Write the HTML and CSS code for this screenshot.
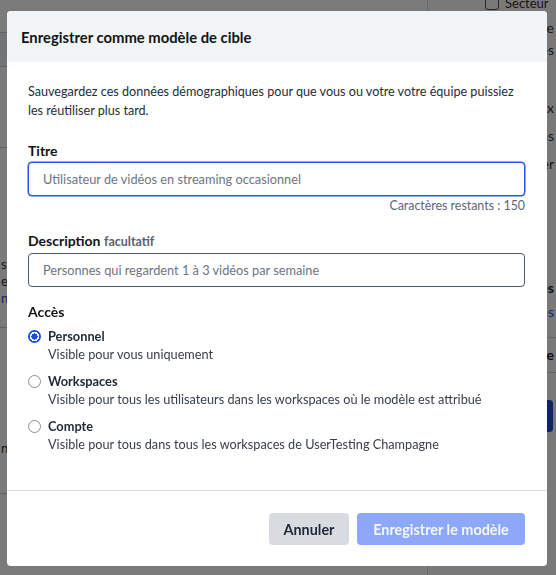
FILE: index.html
```html
<!DOCTYPE html>
<html lang="fr">
<head>
<meta charset="utf-8">
<title>Enregistrer comme modèle de cible</title>
<link rel="stylesheet" href="styles.css">
</head>
<body>
<div class="page">
  <div class="main">
    <div class="main-band"></div>
    <div class="main-rule r3"></div>
    <div class="main-block">
      <p class="main-line">s</p>
      <p class="main-line">e:</p>
      <p class="main-link">n</p>
    </div>
    <div class="main-rule r4"></div>
    <p class="main-line">n</p>
    <div class="main-rule r5"></div>
  </div>
  <aside class="side">
    <div class="side-check"><span class="box"></span><span>Secteur</span></div>
    <p class="side-line l1">Contexte</p>
    <p class="side-line l2">Dépenses</p>
    <p class="side-line l3">Réseaux</p>
    <p class="side-line">Médias</p>
    <p class="side-line">Streamer</p>
    <p class="side-bold">Exigences</p>
    <p class="side-link">Sélections</p>
    <div class="side-rule first"></div>
    <p class="side-bold2">Pratique</p>
    <div class="side-rule"></div>
    <div class="side-btn">Valider</div>
  </aside>
</div>

<div class="overlay">
  <div class="modal" role="dialog" aria-labelledby="modal-title">
    <header class="modal-header">
      <h1 id="modal-title" class="modal-title">Enregistrer comme modèle de cible</h1>
    </header>
    <div class="modal-body">
      <p class="intro">Sauvegardez ces données démographiques pour que vous ou votre votre équipe puissiez les réutiliser plus tard.</p>

      <label class="field-label" for="titre">Titre</label>
      <input id="titre" class="field-input focused" type="text" placeholder="Utilisateur de vidéos en streaming occasionnel">
      <div class="counter">Caractères restants : 150</div>

      <label class="field-label desc" for="desc">Description <span class="optional">facultatif</span></label>
      <input id="desc" class="field-input" type="text" placeholder="Personnes qui regardent 1 à 3 vidéos par semaine">

      <div class="field-label access">Accès</div>
      <div class="radio-list">
        <div class="radio-item">
          <span class="radio checked"></span>
          <div class="radio-text">
            <div class="radio-title">Personnel</div>
            <div class="radio-sub">Visible pour vous uniquement</div>
          </div>
        </div>
        <div class="radio-item">
          <span class="radio"></span>
          <div class="radio-text">
            <div class="radio-title">Workspaces</div>
            <div class="radio-sub">Visible pour tous les utilisateurs dans les workspaces où le modèle est attribué</div>
          </div>
        </div>
        <div class="radio-item">
          <span class="radio"></span>
          <div class="radio-text">
            <div class="radio-title">Compte</div>
            <div class="radio-sub">Visible pour tous dans tous les workspaces de UserTesting Champagne</div>
          </div>
        </div>
      </div>
    </div>
    <footer class="modal-footer">
      <button class="btn btn-cancel" type="button">Annuler</button>
      <button class="btn btn-save" type="button">Enregistrer le modèle</button>
    </footer>
  </div>
</div>
</body>
</html>
```

FILE: styles.css
```css
* { box-sizing: border-box; }

html, body {
  margin: 0;
  padding: 0;
  width: 556px;
  height: 575px;
  overflow: hidden;
}

body {
  font-family: Lato, "Liberation Sans", sans-serif;
  background: #ffffff;
  color: #1f2733;
}

/* ---------- background page ---------- */
.page {
  display: flex;
  height: 575px;
}

.main {
  flex: 0 0 428px;
  border-right: 1px solid #d6d9de;
  padding-top: 32px;
}

.main-band {
  height: 35px;
  border-top: 1px solid #c2c8d2;
  border-bottom: 1px solid #c2c8d2;
  background: #eef1f6;
}
.main-rule {
  height: 1px;
  background: #c9ced6;
}
.main-rule.r3 { margin-top: 80px; margin-bottom: 108px; }
.main-line {
  margin: 0;
  padding-left: 1px;
  font-size: 13px;
  line-height: 17px;
  color: #333;
}
.main-link {
  margin: 0;
  padding-left: 1px;
  font-size: 13px;
  line-height: 17px;
  color: #1d4ed8;
}
.main-rule.r4 { margin-top: 20px; margin-bottom: 112px; }
.main-rule.r5 { margin-top: 36px; }

.side {
  flex: 1;
  padding: 0 2px 0 57px;
  background: #fcfcfd;
}
.side-check {
  display: flex;
  align-items: center;
  gap: 6px;
  font-size: 13px;
  margin-top: -5px;
  height: 16px;
  color: #333;
}
.box {
  flex: 0 0 14px;
  width: 14px;
  height: 14px;
  border: 1.5px solid #555;
  border-radius: 3px;
}
.side-line {
  margin: 0;
  font-size: 14px;
  line-height: 28px;
  color: #333;
  text-align: right;
}
.side-line.l1 { margin-top: 6px; line-height: 22px; }
.side-line.l2 { line-height: 22px; }
.side-line.l3 { margin-top: 33px; }
.side-bold {
  margin: 98px 0 0;
  font-size: 14px;
  font-weight: 700;
  line-height: 24px;
  color: #222;
  text-align: right;
}
.side-link {
  margin: 0;
  font-size: 14px;
  line-height: 24px;
  color: #1d4ed8;
  text-align: right;
}
.side-rule {
  height: 1px;
  background: #cfd3d9;
  margin: 0 -2px 0 -57px;
}
.side-rule.first { margin-top: 13px; }
.side-bold2 {
  margin: 6px 0;
  font-size: 14px;
  font-weight: 700;
  line-height: 22px;
  color: #222;
  text-align: right;
}
.side-btn {
  margin-top: 27px;
  width: 68px;
  height: 32px;
  background: #1d4ed8;
  color: #fff;
  border-radius: 4px;
  font-size: 13px;
  font-weight: 700;
  line-height: 32px;
  text-align: center;
}

/* ---------- overlay + modal ---------- */
.overlay {
  position: fixed;
  inset: 0;
  background: rgba(0, 0, 0, 0.52);
  padding: 11px 9px 9px 7px;
}

.modal {
  height: 555px;
  background: #ffffff;
  border-radius: 4px;
  display: flex;
  flex-direction: column;
  overflow: hidden;
}

.modal-header {
  flex: 0 0 51px;
  background: #f2f5f7;
  display: flex;
  align-items: center;
  padding: 0 14px;
}

.modal-title {
  margin: 0;
  font-size: 14.8px;
  font-weight: 700;
  color: #111418;
  padding-top: 1px;
}

.modal-body {
  flex: 1;
  padding: 20px 22px 0 21px;
}

.intro {
  margin: 0;
  font-size: 12.6px;
  line-height: 19px;
  color: #262d38;
}

.field-label {
  display: block;
  margin-top: 22px;
  font-size: 14px;
  line-height: 18px;
  font-weight: 700;
  color: #111418;
}
.field-label.desc { margin-top: 18px; }
.field-label.access { margin-top: 16px; }

.optional {
  font-size: 12.5px;
  color: #59616d;
  font-weight: 700;
}

.field-input {
  display: block;
  width: 100%;
  height: 34px;
  margin-top: 2px;
  padding: 0 14px;
  border: 1px solid #4e5968;
  border-radius: 4px;
  font-family: inherit;
  font-size: 12.75px;
  color: #2a313c;
  background: #fff;
  outline: none;
}
.field-input.focused {
  border-color: #2255e8;
  box-shadow: 0 0 0 0.5px #2255e8;
}
.field-input::placeholder { color: #6d7582; }

.counter {
  margin-top: 2px;
  text-align: right;
  font-size: 12.4px;
  line-height: 16px;
  color: #5e6672;
}

.radio-list {
  margin-top: 6px;
  display: flex;
  flex-direction: column;
  gap: 9px;
}

.radio-item {
  display: flex;
  gap: 7px;
  align-items: flex-start;
}

.radio {
  flex: 0 0 13px;
  width: 13px;
  height: 13px;
  margin-top: 2.5px;
  border-radius: 50%;
  border: 1px solid #8d8f94;
  background: #fff;
}
.radio.checked {
  border: none;
  background: radial-gradient(circle, #1b4de4 0 3px, #ffffff 3.2px 4.6px, #1b4de4 4.9px);
}

.radio-title {
  font-size: 12.8px;
  line-height: 18px;
  font-weight: 700;
  color: #1e2938;
}
.radio-sub {
  font-size: 12.7px;
  line-height: 18px;
  color: #38404c;
}

.modal-footer {
  flex: 0 0 76px;
  border-top: 1px solid #dcdde3;
  display: flex;
  justify-content: flex-end;
  align-items: flex-start;
  gap: 8px;
  padding: 22px 22px 0 0;
}

.btn {
  height: 32px;
  border: none;
  border-radius: 4px;
  font-family: inherit;
  font-size: 14.4px;
  font-weight: 700;
  padding: 0;
  cursor: pointer;
}
.btn-cancel {
  width: 80px;
  background: #d8dce1;
  color: #1d2a3b;
}
.btn-save {
  width: 168px;
  background: #8ea8f9;
  color: #f4f6ff;
}
```
